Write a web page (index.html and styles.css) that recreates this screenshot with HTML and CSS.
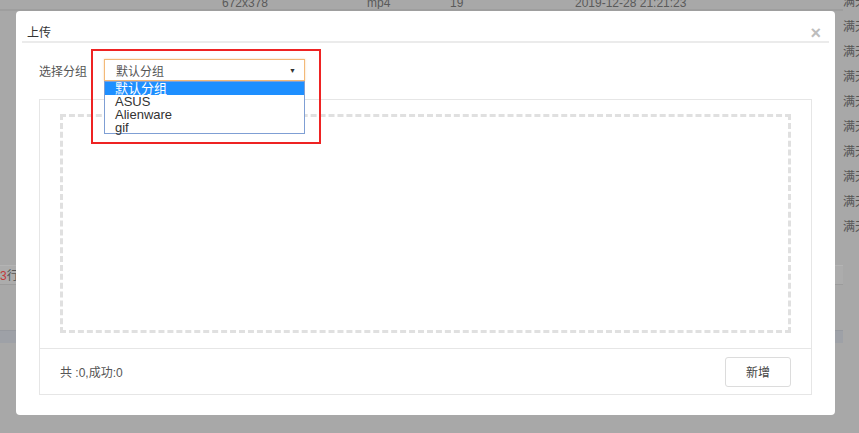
FILE: index.html
```html
<!DOCTYPE html>
<html lang="zh-CN">
<head>
    <meta charset="UTF-8">
    <title>上传</title>
    <link rel="stylesheet" href="styles.css">
</head>
<body>
    <div class="bg">
        <div class="bg-main">
            <div class="bg-head">
                <span class="col-size">672x378</span>
                <span class="col-type">mp4</span>
                <span class="col-num">19</span>
                <span class="col-date">2019-12-28 21:21:23</span>
            </div>
            <div class="bg-space"></div>
            <div class="bg-pager"><em>3</em>行</div>
            <div class="bg-gap"></div>
            <div class="bg-band"></div>
        </div>
        <ul class="bg-side">
            <li>满天星</li>
            <li>满天星</li>
            <li>满天星</li>
            <li>满天星</li>
            <li>满天星</li>
            <li>满天星</li>
            <li>满天星</li>
            <li>满天星</li>
            <li>满天星</li>
            <li>满天星</li>
        </ul>
    </div>

    <div class="modal">
        <div class="modal-head">
            <span class="modal-title">上传</span>
            <span class="modal-close">&times;</span>
        </div>
        <div class="group-row">
            <label class="group-label">选择分组</label>
            <div class="select-wrap">
                <div class="select">
                    <span>默认分组</span>
                    <i class="arrow">&#9660;</i>
                </div>
                <ul class="select-list">
                    <li class="selected">默认分组</li>
                    <li>ASUS</li>
                    <li>Alienware</li>
                    <li>gif</li>
                </ul>
                <div class="mark"></div>
            </div>
        </div>
        <div class="upload-panel">
            <div class="drop-area"></div>
            <div class="upload-foot">
                <span class="count">共 :0,成功:0</span>
                <button class="btn-add">新增</button>
            </div>
        </div>
    </div>
</body>
</html>
```

FILE: styles.css
```css
* {
    padding: 0px;
    margin: 0px;
    list-style: none;
    box-sizing: border-box;
}
body {
    width: 859px;
    height: 433px;
    overflow: hidden;
    background-color: #a8a8a8;
    font-family: "Liberation Sans", "Noto Sans CJK SC", sans-serif;
    font-size: 12px;
    color: #555;
    position: relative;
}

/* page behind the mask */
.bg {
    display: flex;
    height: 433px;
}
.bg-main {
    width: 843px;
}
.bg-head {
    display: flex;
    height: 11px;
    padding-left: 222px;
    border-bottom: 2px solid #9e9e9e;
    line-height: 6px;
    color: #5a5a5a;
    overflow: hidden;
}
.bg-head span {
    display: block;
}
.bg-head .col-size {
    width: 145px;
}
.bg-head .col-type {
    width: 83px;
}
.bg-head .col-num {
    width: 125px;
}
.bg-space {
    height: 254px;
}
.bg-pager {
    height: 20px;
    line-height: 20px;
    background-color: #acacac;
    border-top: 1px solid #b4b4b4;
    border-bottom: 1px solid #9c9c9c;
    font-size: 12px;
    color: #555;
}
.bg-pager em {
    font-style: normal;
    color: #c23a3a;
}
.bg-gap {
    height: 45px;
}
.bg-band {
    height: 13px;
    background-color: #9ea1a7;
    border-top: 1px solid #96999f;
}
.bg-side {
    width: 16px;
    margin-top: -10px;
    overflow: hidden;
    white-space: nowrap;
    color: #555;
}
.bg-side li {
    height: 25px;
    line-height: 25px;
    font-size: 12px;
}

/* dialog */
.modal {
    position: absolute;
    left: 16px;
    top: 11px;
    width: 819px;
    height: 404px;
    background-color: #fff;
    border-radius: 4px;
}
.modal-head {
    display: flex;
    justify-content: space-between;
    height: 32px;
    margin: 0px 6px;
    padding: 14px 8px 0px 5px;
    border-bottom: 2px solid #ebebeb;
    line-height: 16px;
}
.modal-title {
    font-size: 12px;
    color: #333;
}
.modal-close {
    font-size: 18px;
    font-weight: bold;
    line-height: 14px;
    margin-top: 1px;
    color: #bdbdbd;
}
.group-row {
    display: flex;
    align-items: center;
    margin: 16px 0px 0px 23px;
    height: 22px;
}
.group-label {
    width: 65px;
    font-size: 12px;
    color: #555;
}
.select-wrap {
    position: relative;
}
.select {
    display: flex;
    justify-content: space-between;
    align-items: center;
    width: 201px;
    height: 22px;
    padding: 0px 8px 0px 11px;
    border: 1px solid #f3b978;
    box-shadow: 0px 0px 2px rgba(240, 170, 90, 0.5);
    font-size: 12px;
    color: #555;
}
.select .arrow {
    font-style: normal;
    font-size: 7px;
    color: #333;
}
.select-list {
    position: absolute;
    left: 0px;
    top: 22px;
    width: 201px;
    height: 53px;
    background-color: #fff;
    border: 1px solid #7f9fd4;
    font-size: 13px;
    line-height: 13px;
    color: #333;
    z-index: 2;
}
.select-list li {
    height: 13px;
    padding-left: 10px;
}
.select-list .selected {
    background-color: #1e8fff;
    color: #fff;
}
.mark {
    position: absolute;
    left: -13px;
    top: -10px;
    width: 230px;
    height: 95px;
    border: 2px solid #ee2323;
    z-index: 3;
}
.upload-panel {
    margin: 18px 23px 0px;
    height: 296px;
    border: 1px solid #e6e6e6;
}
.drop-area {
    height: 219px;
    margin: 14px 20px 15px;
    border: 3px dashed #e0e0e0;
}
.upload-foot {
    display: flex;
    justify-content: space-between;
    align-items: center;
    height: 46px;
    padding: 0px 20px;
    border-top: 1px solid #e6e6e6;
}
.count {
    font-size: 12px;
    color: #555;
}
.btn-add {
    width: 66px;
    height: 30px;
    background-color: #fff;
    border: 1px solid #dcdcdc;
    border-radius: 3px;
    font-family: "Liberation Sans", "Noto Sans CJK SC", sans-serif;
    font-size: 12px;
    color: #444;
}
```
